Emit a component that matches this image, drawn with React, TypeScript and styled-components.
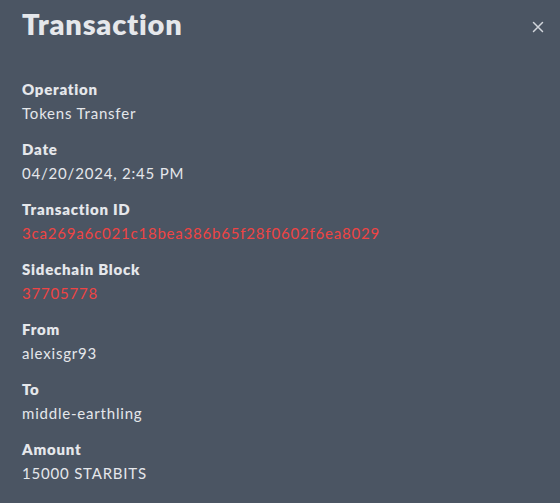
import React from "react";
import styled, { createGlobalStyle } from "styled-components";

const Global = createGlobalStyle`
  html, body { margin: 0; padding: 0; background: #4b5563; }
  body { font-family: Lato, "Noto Sans", sans-serif; }
`;

const Panel = styled.div`
  width: 560px;
  height: 503px;
  box-sizing: border-box;
  background: #4b5563;
  color: #e5e7eb;
  padding: 3px 22px 0 22px;
  overflow: hidden;
`;

const Header = styled.div`
  display: flex;
  align-items: center;
  justify-content: space-between;
  height: 40px;
`;

const Title = styled.h1`
  margin: 0;
  font-size: 29px;
  font-weight: 800;
  color: #e5e7eb;
  letter-spacing: 0.8px;
`;

const Close = styled.button`
  background: none;
  border: none;
  padding: 0;
  margin: 7px -10px 0 0;
  width: 20px;
  height: 20px;
  display: flex;
  align-items: center;
  justify-content: center;
  cursor: pointer;
`;

const List = styled.dl`
  margin: 36px 0 0 0;
  display: flex;
  flex-direction: column;
  gap: 15px;
`;

const Item = styled.div`
  display: flex;
  flex-direction: column;
  gap: 3px;
`;

const Label = styled.dt`
  font-size: 15px;
  font-weight: 800;
  line-height: 21px;
  letter-spacing: 0.75px;
`;

const Value = styled.dd<{ $link?: boolean }>`
  margin: 0;
  font-size: 15px;
  line-height: 21px;
  letter-spacing: 0.8px;
  color: ${(p) => (p.$link ? "#ef4444" : "#e5e7eb")};
`;

const rows: { label: string; value: string; link?: boolean }[] = [
  { label: "Operation", value: "Tokens Transfer" },
  { label: "Date", value: "04/20/2024, 2:45 PM" },
  { label: "Transaction ID", value: "3ca269a6c021c18bea386b65f28f0602f6ea8029", link: true },
  { label: "Sidechain Block", value: "37705778", link: true },
  { label: "From", value: "alexisgr93" },
  { label: "To", value: "middle-earthling" },
  { label: "Amount", value: "15000 STARBITS" },
];

export default function App() {
  return (
    <>
      <Global />
      <Panel>
        <Header>
          <Title>Transaction</Title>
          <Close aria-label="Close">
            <svg width="12" height="12" viewBox="0 0 12 12">
              <path d="M1.5 1.5L10.5 10.5M10.5 1.5L1.5 10.5" stroke="#d1d5db" strokeWidth="1.5" strokeLinecap="round" />
            </svg>
          </Close>
        </Header>
        <List>
          {rows.map((r) => (
            <Item key={r.label}>
              <Label>{r.label}</Label>
              <Value $link={r.link}>{r.value}</Value>
            </Item>
          ))}
        </List>
      </Panel>
    </>
  );
}
